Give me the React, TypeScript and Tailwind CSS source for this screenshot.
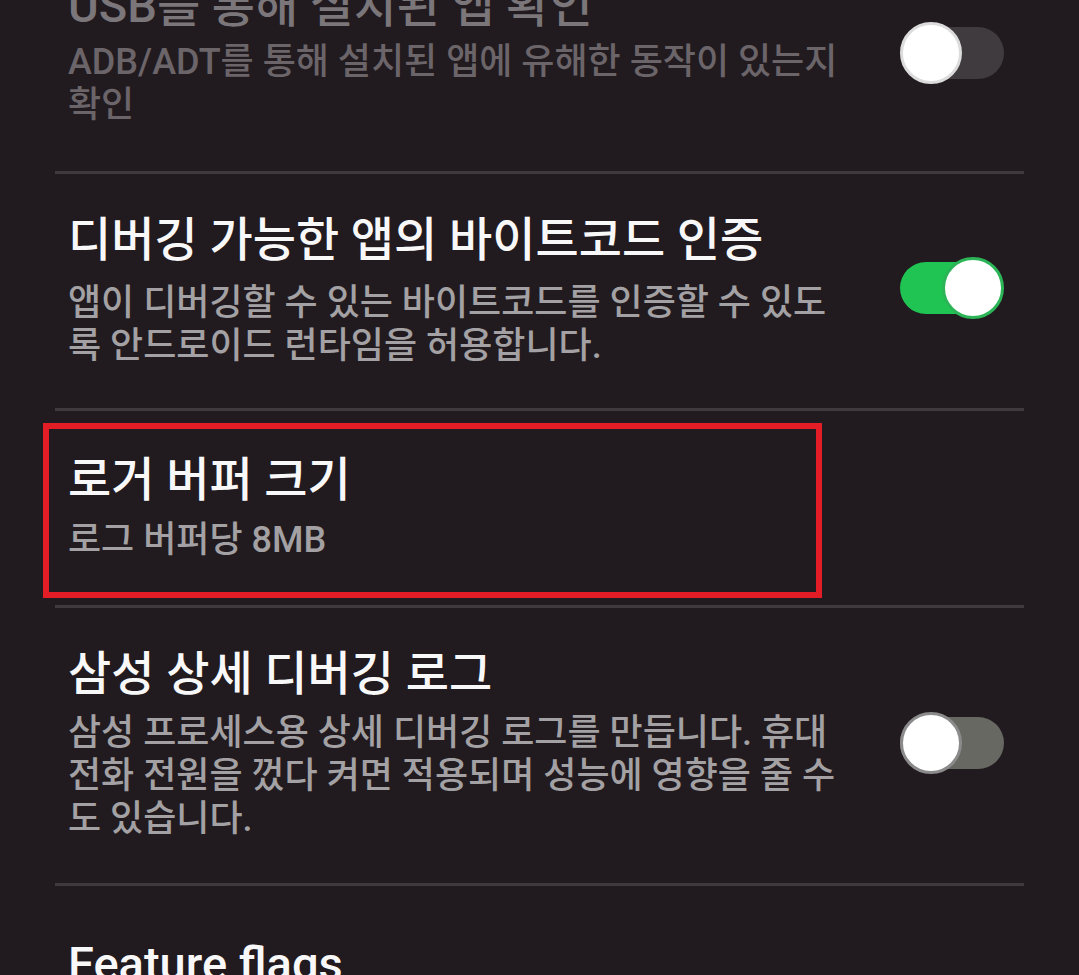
import React from "react";

type ToggleKind = "off" | "on" | "offLight";

function Toggle({ kind }: { kind: ToggleKind }) {
  if (kind === "on") {
    return (
      <div className="relative w-[104px] h-[62px] flex items-center">
        <div className="w-[101px] h-[52px] rounded-full bg-[#1fc452]" />
        <div className="absolute right-0 top-0 w-[62px] h-[62px] rounded-full bg-white border-[3px] border-[#2bb557]" />
      </div>
    );
  }
  const track = kind === "off" ? "bg-[#3f3b3e]" : "bg-[#686862]";
  const ring = kind === "off" ? "border-[#dcdcdc]" : "border-[#8b8b8b]";
  return (
    <div className="relative w-[104px] h-[62px] flex items-center">
      <div className={`w-[104px] h-[52px] rounded-full ${track}`} />
      <div className={`absolute left-0 top-0 w-[62px] h-[62px] rounded-full bg-white border-[3px] ${ring}`} />
    </div>
  );
}

function Divider() {
  return <div className="mx-[55px] h-[3px] bg-[#403a3f]" />;
}

export default function App() {
  return (
    <div
      className="w-[1079px] h-[975px] overflow-hidden bg-[#211b20]"
      style={{ fontFamily: 'Roboto, "Noto Sans CJK KR", sans-serif' }}
    >
      {/* USB install check (disabled, cut at top) */}
      <div className="flex items-start justify-between pl-[68px] pr-[75px] -mt-[23px] pb-[44px]">
        <div className="flex flex-col">
          <div className="text-[47px] leading-[58px] font-medium text-[#7b767a]">USB를 통해 설치된 앱 확인</div>
          <div className="mt-[6px] text-[36px] leading-[43px] font-medium text-[#6b656a]">
            <div>ADB/ADT를 통해 설치된 앱에 유해한 동작이 있는지</div>
            <div>확인</div>
          </div>
        </div>
        <div className="mt-[45px]">
          <Toggle kind="off" />
        </div>
      </div>
      <Divider />

      {/* bytecode verification */}
      <div className="flex items-start justify-between pl-[68px] pr-[75px] pt-[37px] pb-[40px]">
        <div className="flex flex-col">
          <div className="text-[47px] leading-[58px] font-medium text-[#f8f8f8]">디버깅 가능한 앱의 바이트코드 인증</div>
          <div className="mt-[13px] text-[36px] leading-[43px] font-medium text-[#a3a1a3]">
            <div>앱이 디버깅할 수 있는 바이트코드를 인증할 수 있도</div>
            <div>록 안드로이드 런타임을 허용합니다.</div>
          </div>
        </div>
        <div className="mt-[46px]">
          <Toggle kind="on" />
        </div>
      </div>
      <Divider />

      {/* logger buffer size */}
      <div className="relative flex flex-col pl-[68px] pt-[40px] pb-[43px]">
        <div className="text-[47px] leading-[58px] font-medium text-[#f8f8f8]">로거 버퍼 크기</div>
        <div className="mt-[10px] text-[36px] leading-[43px] font-medium text-[#a3a1a3]">로그 버퍼당 8MB</div>
        <div className="absolute left-[43px] top-[12px] right-[257px] bottom-[7px] border-[6px] border-[#e31d26]" />
      </div>
      <Divider />

      {/* samsung debug log */}
      <div className="flex items-start justify-between pl-[68px] pr-[75px] pt-[37px] pb-[42px]">
        <div className="flex flex-col">
          <div className="text-[47px] leading-[58px] font-medium text-[#f8f8f8]">삼성 상세 디버깅 로그</div>
          <div className="mt-[9px] text-[36px] leading-[43px] font-medium text-[#a3a1a3]">
            <div>삼성 프로세스용 상세 디버깅 로그를 만듭니다. 휴대</div>
            <div>전화 전원을 껐다 켜면 적용되며 성능에 영향을 줄 수</div>
            <div>도 있습니다.</div>
          </div>
        </div>
        <div className="mt-[67px]">
          <Toggle kind="offLight" />
        </div>
      </div>
      <Divider />

      {/* feature flags */}
      <div className="pl-[68px] pt-[49px]">
        <div className="text-[47px] leading-[58px] font-medium text-[#f8f8f8]">Feature flags</div>
      </div>
    </div>
  );
}
